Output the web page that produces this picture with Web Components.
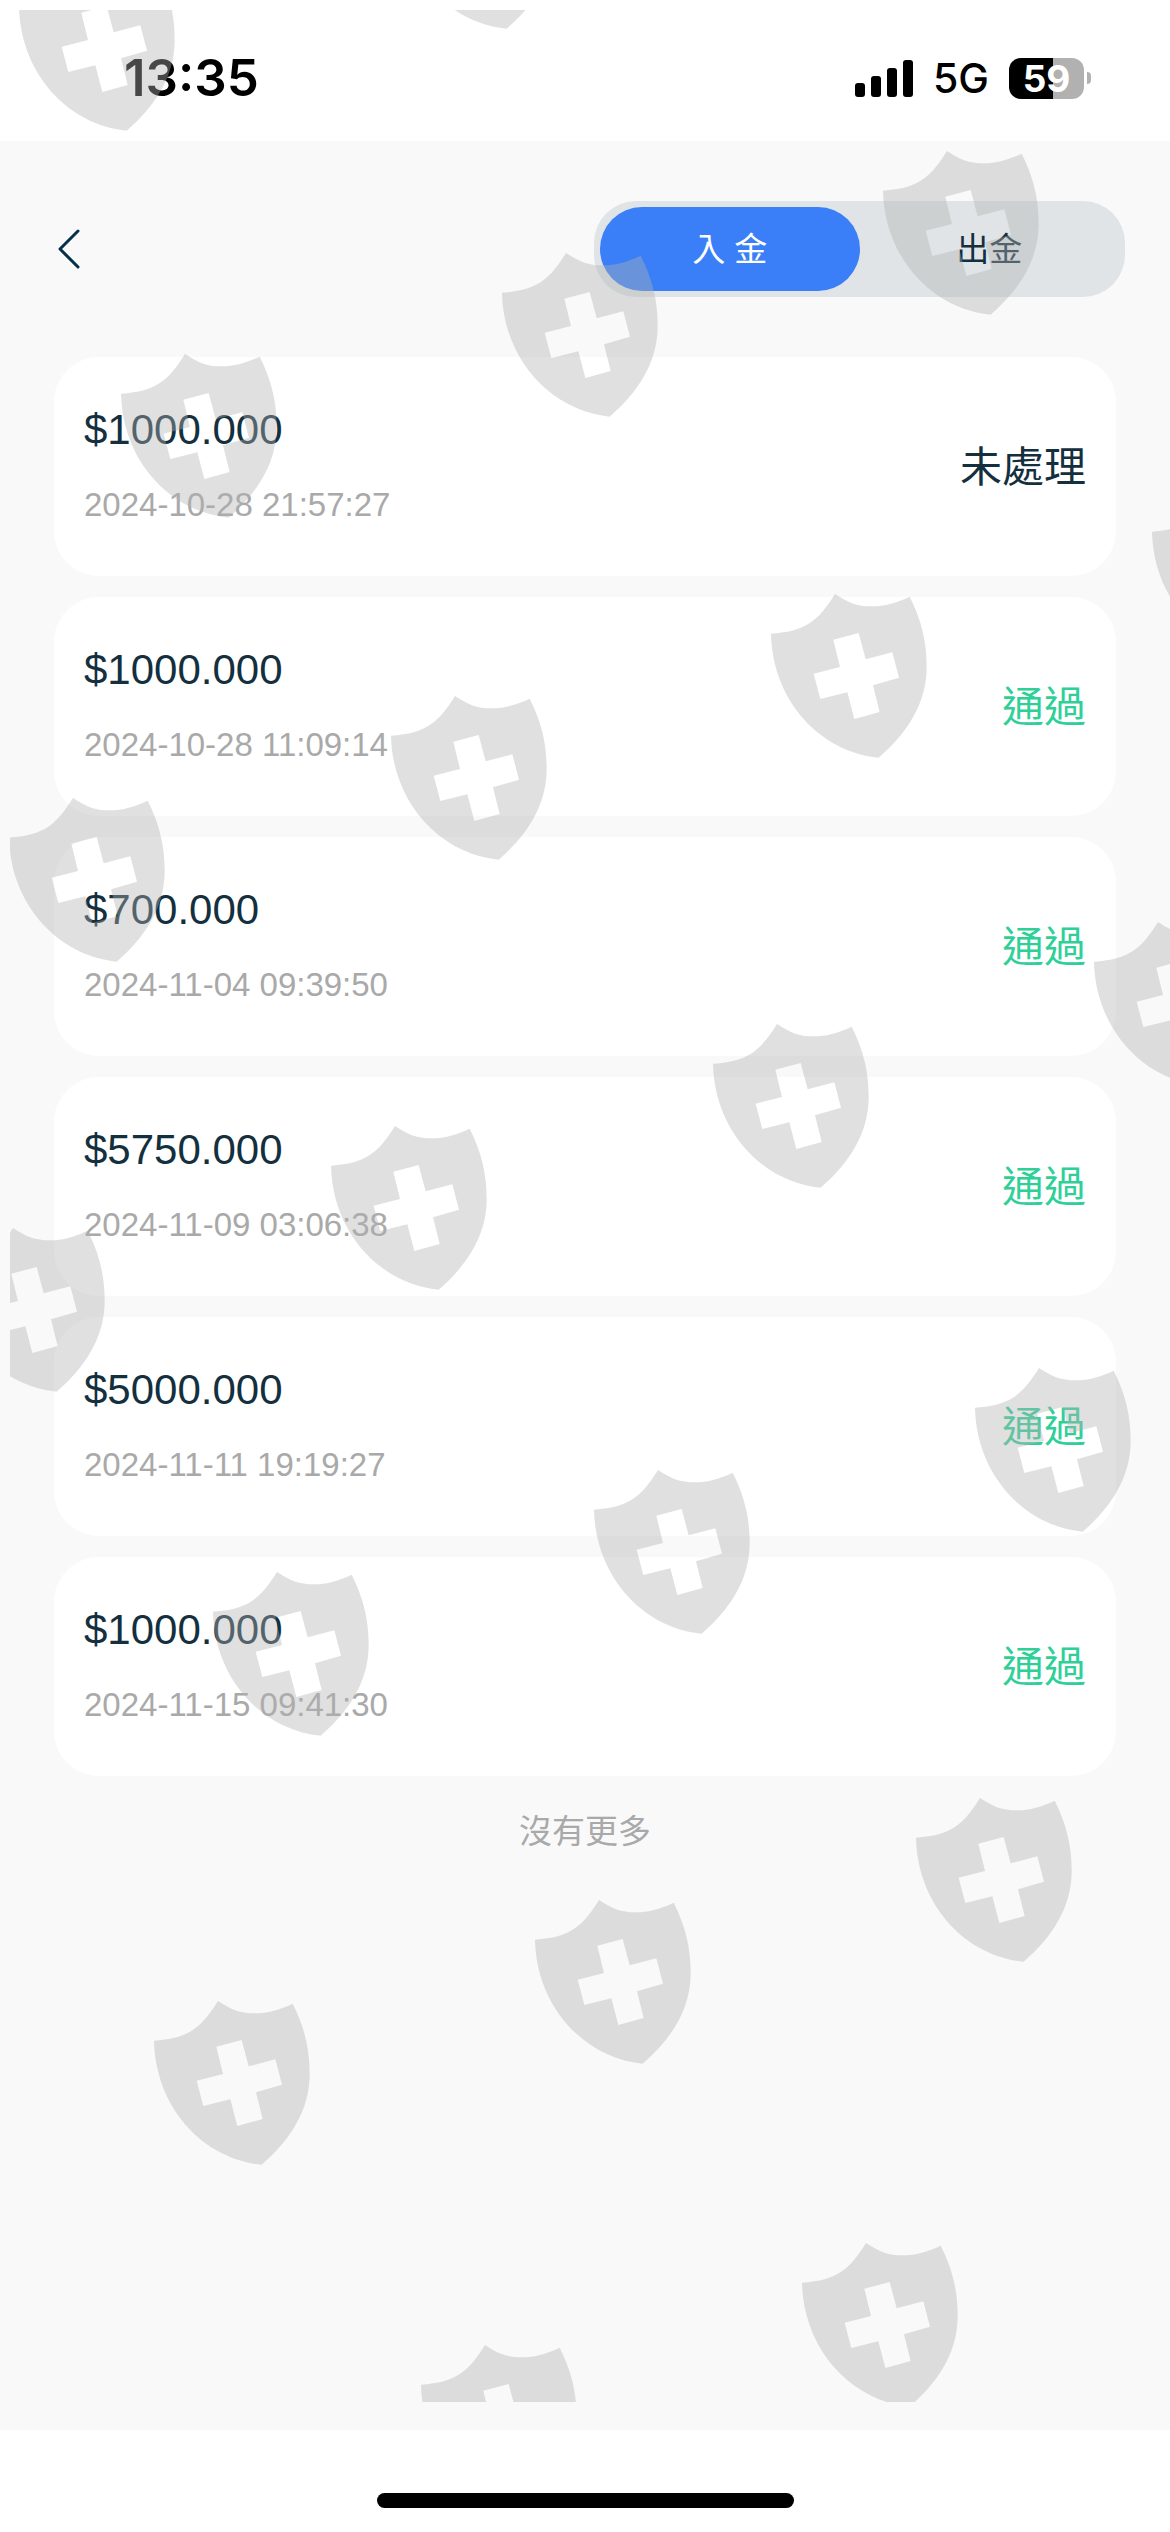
<!DOCTYPE html>
<html lang="zh-Hant">
<head>
<meta charset="utf-8">
<meta name="viewport" content="width=device-width, initial-scale=1">
<title>入金 / 出金</title>
<style>
  html, body { margin: 0; min-height: 100%; }
  body { background: #fff; font-family: "Liberation Sans", "Noto Sans CJK TC", sans-serif; }
</style>
</head>
<body>
<funds-app>
  <status-bar slot="status" time="13:35" network="5G" battery="59"></status-bar>
  <page-header slot="header"></page-header>
  <record-card amount="$1000.000" time="2024-10-28 21:57:27" state="pending">未處理</record-card>
  <record-card amount="$1000.000" time="2024-10-28 11:09:14" state="passed">通過</record-card>
  <record-card amount="$700.000" time="2024-11-04 09:39:50" state="passed">通過</record-card>
  <record-card amount="$5750.000" time="2024-11-09 03:06:38" state="passed">通過</record-card>
  <record-card amount="$5000.000" time="2024-11-11 19:19:27" state="passed">通過</record-card>
  <record-card amount="$1000.000" time="2024-11-15 09:41:30" state="passed">通過</record-card>
  <span slot="end">沒有更多</span>
</funds-app>

<script>
const define = (name, render) => customElements.define(name, class extends HTMLElement {
  constructor() {
    super();
    this.attachShadow({ mode: 'open' });
  }
  connectedCallback() {
    this.shadowRoot.innerHTML = render(this);
  }
});

define('status-bar', el => `
  <style>
    :host { display: flex; align-items: center; justify-content: space-between; box-sizing: border-box;
      height: 141px; padding: 15px 79px 0 124px; background: #fff; color: #000; font-family: Inter, sans-serif; }
    time { font-size: 51px; line-height: 60px; font-weight: 600; }
    .right { display: flex; align-items: center; gap: 20px; }
    .signal { display: block; width: 58px; height: 37px; }
    .net { font-size: 41px; line-height: 48px; font-weight: 500; }
    .battery { display: flex; align-items: center; gap: 3px; }
    .cell { width: 75px; height: 41px; border-radius: 12px; color: #fff; text-align: center;
      font-size: 37px; line-height: 41px; font-weight: 700;
      background: linear-gradient(90deg, #000 ${el.getAttribute('battery')}%, #b1b1b1 0); }
    .nub { width: 4px; height: 12px; border-radius: 0 4px 4px 0; background: #b1b1b1; }
  </style>
  <time>${el.getAttribute('time')}</time>
  <div class="right">
    <svg class="signal" viewBox="0 0 58 37" aria-hidden="true">
      <rect x="0" y="23" width="10" height="14" rx="3"/><rect x="16" y="16" width="10" height="21" rx="3"/>
      <rect x="32" y="8" width="10" height="29" rx="3"/><rect x="48" y="0" width="10" height="37" rx="3"/>
    </svg>
    <span class="net">${el.getAttribute('network')}</span>
    <div class="battery"><div class="cell">${el.getAttribute('battery')}</div><div class="nub"></div></div>
  </div>`);

define('segmented-tabs', () => `
  <style>
    :host { display: grid; grid-template-columns: 1fr 1fr; box-sizing: border-box; width: 531px; height: 96px;
      padding: 6px; border-radius: 42px; background: #e0e4e7; }
    button { margin: 0; padding: 2px 0 0; border: 0; border-radius: 42px; background: none; color: #142f3e;
      font: inherit; font-size: 33px; line-height: 48px; }
    button[aria-pressed="true"] { background: #3a7ff7; color: #fff; }
  </style>
  <button type="button" aria-pressed="true">入 金</button>
  <button type="button" aria-pressed="false">出金</button>`);

define('page-header', () => `
  <style>
    :host { display: flex; align-items: center; justify-content: space-between; padding: 60px 45px 60px 45px; }
    button { display: flex; align-items: center; justify-content: center; width: 48px; height: 60px;
      margin: 0; padding: 0; border: 0; background: none; }
    svg { width: 24px; height: 40px; fill: none; stroke: #03304b; stroke-width: 3; stroke-linecap: round; stroke-linejoin: round; }
  </style>
  <button type="button" aria-label="返回"><svg viewBox="0 0 24 40" aria-hidden="true"><path d="M21 2 3 20 21 38"/></svg></button>
  <segmented-tabs></segmented-tabs>`);

define('record-card', el => `
  <style>
    :host { display: flex; align-items: center; justify-content: space-between;
      padding: 49px 30px 47px; border-radius: 45px; background: #fff; color: #142f3e; }
    .info { display: flex; flex-direction: column; gap: 27px; }
    .amount, .state { font-size: 42px; line-height: 48px; }
    time { font-size: 33px; line-height: 48px; color: #a9a9a9; }
    :host([state="passed"]) .state { color: #2fcf98; }
  </style>
  <div class="info">
    <span class="amount">${el.getAttribute('amount')}</span>
    <time>${el.getAttribute('time')}</time>
  </div>
  <span class="state"><slot></slot></span>`);

/* Top-left peak of every shield, row by row. */
const SHIELDS = [
  [83, -33], [463, -135],
  [185, 354], [566, 253], [947, 151],
  [73, 798], [455, 696], [835, 594], [1216, 492],
  [13, 1228], [395, 1126], [777, 1024], [1158, 922],
  [277, 1572], [658, 1470], [1039, 1368],
  [218, 2001], [599, 1900], [980, 1798],
  [485, 2345], [866, 2243]
];

define('shield-watermark', () => `
  <style>
    :host { display: block; position: absolute; inset: 10px 0 130px 10px; overflow: hidden; pointer-events: none; }
    svg { display: block; width: 100%; height: 100%; fill: #b2b2b2; fill-opacity: .4; }
  </style>
  <svg aria-hidden="true">
    <defs>
      <path id="shield" fill-rule="evenodd" transform="scale(.33333) translate(-285 -71)"
        d="M285 71C325 97 350 108 395 108C435 108 470 97 509 79C545 150 560 215 560 290C560 400 500 490 416 562C240 545 97 390 93 190C200 183 235 150 285 71Z
           M280 208 356 188 377 267 457 246 477 322 399 345 419 425 343 446 322 366 241 386 221 310 300 290Z"/>
    </defs>
    <g transform="translate(-10 -10)">
      ${SHIELDS.map(([x, y]) => `<use href="#shield" x="${x}" y="${y}"/>`).join('')}
    </g>
  </svg>`);

define('home-indicator', () => `
  <style>
    :host { display: flex; justify-content: center; padding: 63px 0 24px; background: #fff; }
    div { width: 417px; height: 15px; border-radius: 8px; background: #000; }
  </style>
  <div></div>`);

define('funds-app', () => `
  <style>
    :host { display: flex; flex-direction: column; position: relative; min-height: 100vh; overflow: hidden; background: #f9f9f9; }
    main { flex: 1; }
    .list { display: flex; flex-direction: column; gap: 21px; padding: 0 54px; }
    .end { margin: 32px 0 0; text-align: center; font-size: 33px; line-height: 48px; color: #a9a9a9; }
  </style>
  <slot name="status"></slot>
  <slot name="header"></slot>
  <main>
    <div class="list"><slot></slot></div>
    <p class="end"><slot name="end"></slot></p>
  </main>
  <home-indicator></home-indicator>
  <shield-watermark></shield-watermark>`);
</script>
</body>
</html>
